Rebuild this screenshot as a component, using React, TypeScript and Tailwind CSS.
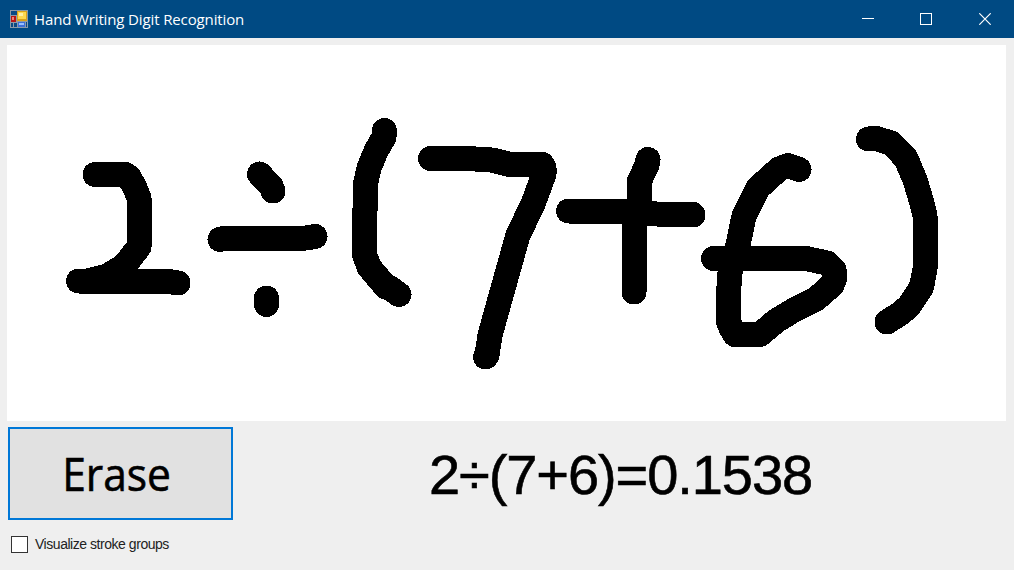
const strokes = [
  "M95 174.5H125L129 177L135 188L139 198V247L124 266L107 276L88 281H78.5H166L178 283",
  "M259.5 174L271 186L273 191",
  "M220 239.5L225 238H306L315 236.5",
  "M266.5 298V304.5",
  "M384.5 130.5L384 137L376 151L369 168L365.5 184L365 212L364 213V253L369 267L386 287L390 288L399 294.5",
  "M430.5 158.5H467L492 160L510 164.5H542L544 168V174L533 204L518 235L509 267L490 335L487 355L485.5 357",
  "M568.5 211H617L657 214H692L693 215",
  "M648 159.5L647 165L639 182V205L634 222V292",
  "M799 169.5L788 165.5L779 169L758 188L744 216L738 245L730 272L728 300V320L731 328L735 334.5H760L776 321L794 310L816 299L832 285L835 277L834 270L827 263L806 258.5H713.5",
  "M868.5 139L876 138.5L891 143L906 158.5L915 180L922 203L925 216V269L921.5 287L909 306L901 313L887 322",
];

function FormIcon() {
  return (
    <svg width="18" height="18" viewBox="0 0 18 18" shapeRendering="crispEdges">
      <rect width="18" height="18" fill="#8d9aa8" />
      <rect x="1" y="1" width="6" height="4" fill="#0a4a84" />
      <rect x="1" y="6" width="5" height="6" fill="#b71616" />
      <rect x="2" y="7" width="2" height="3" fill="#f08070" />
      <rect x="1" y="13" width="6" height="4" fill="#0a4a84" />
      <rect x="3" y="13" width="1" height="4" fill="#8d9aa8" />
      <rect x="7" y="1" width="10" height="10" fill="#d9a21a" />
      <rect x="8" y="2" width="8" height="7" fill="#ffd84e" />
      <rect x="9" y="3" width="4" height="3" fill="#fff0a8" />
      <rect x="8" y="12" width="7" height="5" fill="#3e70d8" />
      <rect x="9" y="13" width="5" height="2" fill="#9ac0ff" />
      <rect x="16" y="12" width="1" height="5" fill="#0a4a84" />
    </svg>
  );
}

function TitleBar() {
  return (
    <header className="flex h-[38px] items-center bg-[#004a83] pl-[10px] text-white">
      <FormIcon />
      <h1 className="ml-[6px] grow whitespace-nowrap pb-px font-['Open_Sans',sans-serif] text-[15px] leading-5 tracking-[-0.13px]">
        Hand Writing Digit Recognition
      </h1>
      <div className="flex h-full">
        <button aria-label="Minimize" className="flex w-[58px] items-center justify-center">
          <svg width="12" height="12" viewBox="0 0 12 12" shapeRendering="crispEdges">
            <path d="M0 5.5H12" stroke="white" />
          </svg>
        </button>
        <button aria-label="Maximize" className="flex w-[58px] items-center justify-center">
          <svg width="12" height="12" viewBox="0 0 12 12" shapeRendering="crispEdges">
            <rect x="0.5" y="0.5" width="11" height="11" fill="none" stroke="white" />
          </svg>
        </button>
        <button aria-label="Close" className="flex w-[59px] items-center justify-center">
          <svg width="12" height="12" viewBox="0 0 12 12">
            <path d="M0.3 0.3L11.7 11.7M11.7 0.3L0.3 11.7" stroke="white" strokeWidth="1.2" />
          </svg>
        </button>
      </div>
    </header>
  );
}

export default function App() {
  return (
    <div className="flex h-[570px] w-[1014px] flex-col overflow-hidden bg-[#efefef] text-black">
      <TitleBar />
      <main className="flex flex-col pt-[7px]">
        <div className="ml-[7px] h-[376px] w-[999px] bg-white">
          <svg width="999" height="376" viewBox="7 45 999 376" shapeRendering="crispEdges">
            <g fill="none" stroke="black" strokeWidth="25" strokeLinecap="round" strokeLinejoin="round">
              {strokes.map((d) => (
                <path key={d} d={d} />
              ))}
            </g>
          </svg>
        </div>
        <div className="mt-[6px] flex pl-2">
          <button className="flex h-[93px] w-[225px] items-center justify-center border-2 border-[#0078d7] bg-[#e1e1e1] pr-[7px] font-['Open_Sans',sans-serif] text-[45px] leading-none">
            <span className="scale-x-[0.945] [-webkit-text-stroke:0.6px_black]">Erase</span>
          </button>
          <output className="ml-[196px] mt-[16px] whitespace-nowrap font-['Liberation_Sans',sans-serif] text-[56px] leading-[64px] tracking-[-1.08px] [-webkit-text-stroke:0.6px_black]">
            2÷(7+6)=0.1538
          </output>
        </div>
        <label className="mt-[13px] flex h-[22px] items-center pl-[11px]">
          <input type="checkbox" className="size-[17px] appearance-none border border-[#333333] bg-white" />
          <span className="ml-[7px] whitespace-nowrap font-['Liberation_Sans',sans-serif] text-[14px] leading-4 tracking-[-0.46px] text-[#222222]">
            Visualize stroke groups
          </span>
        </label>
      </main>
    </div>
  );
}
